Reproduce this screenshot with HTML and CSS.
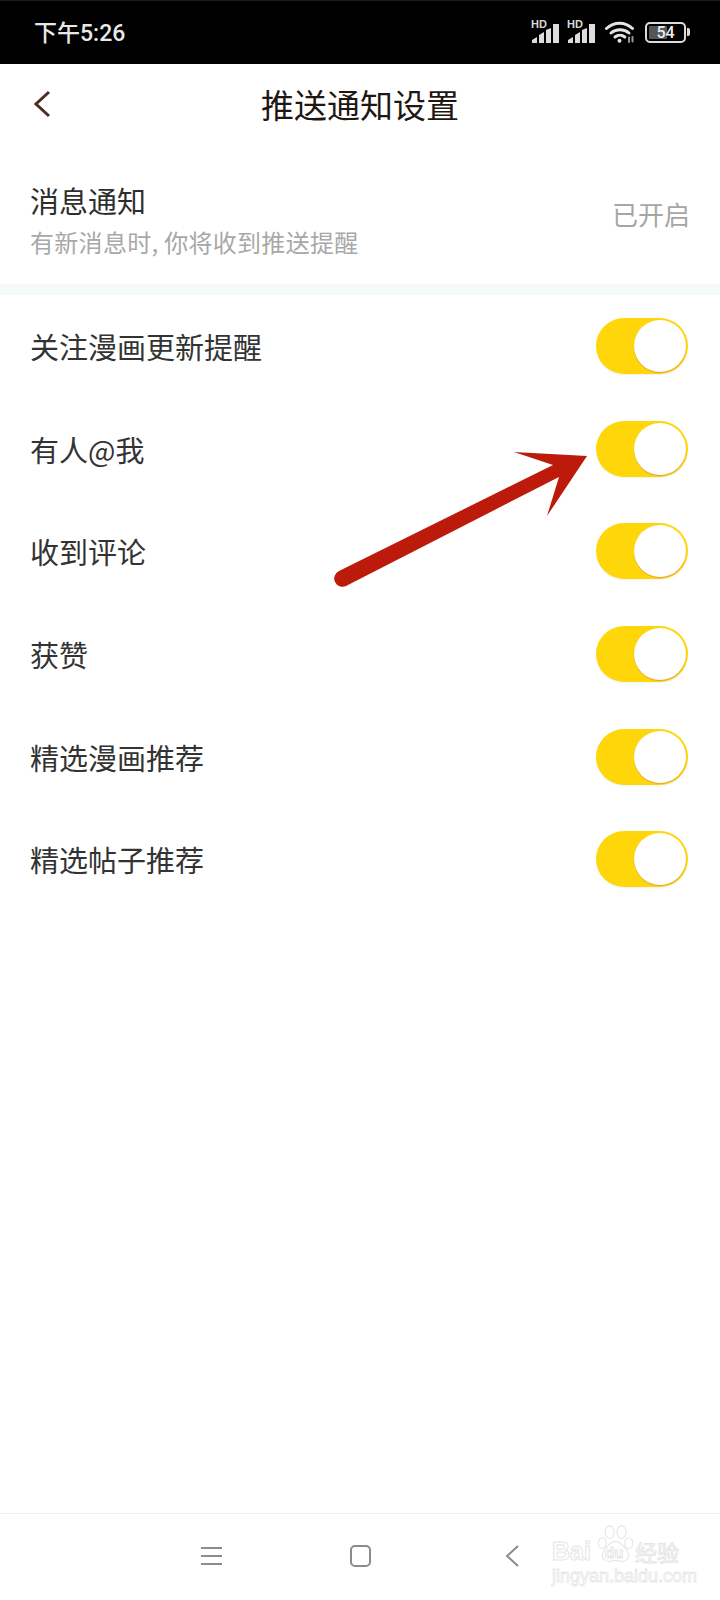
FILE: index.html
```html
<!DOCTYPE html>
<html lang="zh-CN">
<head>
  <meta charset="utf-8">
  <title>推送通知设置</title>
  <link rel="stylesheet" href="styles.css">
</head>
<body>
  <div class="page">
    <div class="status">
      <span class="time">下午5:26</span>
      <div class="status-icons">
        <div class="sim">
          <span class="hd">HD</span>
          <svg class="bars" width="28" height="20" viewBox="0 0 28 20"><path d="M0 20v-3l5-3v6zM7 20v-8l5-3v11zM14 20V7l5-2v15zM21 20V1h6v19z" fill="#dcdcdc"/></svg>
        </div>
        <div class="sim">
          <span class="hd">HD</span>
          <svg class="bars" width="28" height="20" viewBox="0 0 28 20"><path d="M0 20v-3l5-3v6zM7 20v-8l5-3v11zM14 20V7l5-2v15zM21 20V1h6v19z" fill="#dcdcdc"/></svg>
        </div>
        <svg class="wifi" width="30" height="22" viewBox="0 0 30 22" fill="none" stroke="#e4e4e4" stroke-width="3" stroke-linecap="round">
          <path d="M1.500 7.500C9 .5 20 .5 27.500 7.500"/>
          <path d="M6 12c5-4.500 13-4.500 18 0"/>
          <path d="M10 16c2.800-2.300 7-2.300 9.800 0"/>
          <circle cx="14.500" cy="19.800" r="2" fill="#e4e4e4" stroke="none"/>
          <path d="M24 16.500v4.500M27.500 16v4.500" stroke="#9a9a9a" stroke-width="2"/>
        </svg>
        <div class="battery">
          <div class="battery-body">
            <span class="battery-level"></span>
            <span class="battery-num">54</span>
          </div>
          <span class="battery-cap"></span>
        </div>
      </div>
    </div>

    <div class="header">
      <svg class="back" width="18" height="28" viewBox="0 0 18 28" fill="none"><path d="M16 2 3 14l13 12" stroke="#4a2d20" stroke-width="3"/></svg>
      <h1 class="title">推送通知设置</h1>
    </div>

    <div class="notice">
      <div class="notice-text">
        <div class="notice-name">消息通知</div>
        <div class="notice-sub">有新消息时, 你将收到推送提醒</div>
      </div>
      <div class="notice-state">已开启</div>
    </div>

    <div class="band"></div>

    <div class="list">
      <div class="row"><span class="label">关注漫画更新提醒</span><div class="toggle"><span class="knob"></span></div></div>
      <div class="row"><span class="label">有人@我</span><div class="toggle"><span class="knob"></span></div></div>
      <div class="row"><span class="label">收到评论</span><div class="toggle"><span class="knob"></span></div></div>
      <div class="row"><span class="label">获赞</span><div class="toggle"><span class="knob"></span></div></div>
      <div class="row"><span class="label">精选漫画推荐</span><div class="toggle"><span class="knob"></span></div></div>
      <div class="row"><span class="label">精选帖子推荐</span><div class="toggle"><span class="knob"></span></div></div>
    </div>

    <div class="spacer"></div>

    <div class="nav">
      <div class="nav-menu"><span></span><span></span><span></span></div>
      <div class="nav-home"></div>
      <svg class="nav-back" width="14" height="22" viewBox="0 0 14 22" fill="none"><path d="M13 1 2 11l11 10" stroke="#8c8c8c" stroke-width="2"/></svg>
    </div>

    <!-- annotation drawn over the screenshot -->
    <svg class="arrow" width="720" height="1600" viewBox="0 0 720 1600">
      <path d="M587 456 514 452 553 465 339 571a8 8 0 0 0 7 15L559 477 547 516z" fill="#bc1a0a"/>
    </svg>

    <div class="mark">
      <svg class="paw" width="40" height="44" viewBox="0 0 44 44" fill="#fff" stroke="#e6e6e6" stroke-width="1.200">
        <ellipse cx="7" cy="20" rx="4.500" ry="6"/>
        <ellipse cx="15" cy="8" rx="5" ry="7"/>
        <ellipse cx="28" cy="8" rx="5" ry="7"/>
        <ellipse cx="36" cy="20" rx="4.500" ry="6"/>
        <path d="M21 18c-6 0-8 6-12 10-4 5-1 12 5 12 3 0 5-1 7-1s5 1 8 1c6 0 9-7 5-12-4-4-6-10-13-10z"/>
      </svg>
      <div class="mark-top"><span class="mark-bai">Bai</span><span class="mark-du">du</span><span class="mark-cn">经验</span></div>
      <div class="mark-url">jingyan.baidu.com</div>
    </div>
  </div>
</body>
</html>
```

FILE: styles.css
```css
body {margin:0; background:#fff; font-family:"Noto Sans CJK SC","Noto Sans",sans-serif;}
.page {position:relative; display:flex; flex-direction:column; width:720px; height:1600px; overflow:hidden;}

.status {display:flex; align-items:center; justify-content:space-between; box-sizing:border-box; height:64px; padding:0 30px 0 34px; background:#000; border-top:1px solid #1c1c1c;}
.time {font-family:Roboto,"Noto Sans CJK SC",sans-serif; font-size:23px; font-weight:500; color:#e8e8e8; margin-top:-3px;}
.status-icons {display:flex; align-items:flex-end; height:24px; margin-top:-3px;}
.sim {position:relative; width:28px; height:22px; margin-right:8px;}
.hd {position:absolute; left:0; top:-3px; font-family:"Liberation Sans",sans-serif; font-size:11px; font-weight:bold; color:#d8d8d8;}
.bars {position:absolute; left:1px; bottom:0;}
.wifi {margin:0 10px 0 2px;}
.battery {display:flex; align-items:center; height:22px;}
.battery-body {position:relative; box-sizing:border-box; width:41px; height:21px; border:2px solid #dcdcdc; border-radius:5px; display:flex; align-items:center; justify-content:center;}
.battery-level {position:absolute; left:2px; top:2px; bottom:2px; width:18px; background:#555; border-radius:1px;}
.battery-num {position:relative; font-family:Roboto,sans-serif; font-size:16px; font-weight:500; color:#eee;}
.battery-cap {width:3px; height:8px; margin-left:1px; background:#dcdcdc; border-radius:0 2px 2px 0;}

.header {position:relative; display:flex; align-items:center; justify-content:center; height:82px;}
.back {position:absolute; left:33px; top:26px;}
.title {margin:-2px 0 0; font-size:33px; font-weight:400; color:#1f1712;}

.notice {display:flex; align-items:center; justify-content:space-between; box-sizing:border-box; height:138px; padding:0 30px;}
.notice-text {display:flex; flex-direction:column; margin-top:10px;}
.notice-name {font-size:29px; line-height:40px; color:#2e2e2e;}
.notice-sub {font-size:24px; line-height:36px; margin-top:4px; letter-spacing:.3px; color:#a8a8a8;}
.notice-state {font-size:26px; margin-bottom:4px; color:#a6a6a6;}

.band {height:11px; background:#f5f9fa;}

.list {display:flex; flex-direction:column;}
.row {display:flex; align-items:center; justify-content:space-between; height:102.6px; padding:0 32px 0 30px;}
.label {font-size:29px; color:#333;}
.toggle {display:flex; justify-content:flex-end; align-items:center; box-sizing:border-box; width:92px; height:56px; padding-right:2px; background:#ffd60a; border-radius:28px; box-shadow:0 2px 3px -2px rgba(0,0,0,.12);}
.knob {width:52px; height:52px; background:#fff; border-radius:50%; box-shadow:0 1px 1px #e2a52a;}

.spacer {flex:1;}

.nav {display:flex; align-items:center; box-sizing:border-box; height:87px; padding:0 0 3px 201px; border-top:1px solid #f0f0f0;}
.nav-menu {display:flex; flex-direction:column; justify-content:space-between; width:21px; height:18px; margin-right:128px;}
.nav-menu span {display:block; height:2px; background:#8c8c8c;}
.nav-home {box-sizing:border-box; width:21px; height:22px; margin-right:134px; border:2px solid #8c8c8c; border-radius:5px;}

.arrow {position:absolute; left:0; top:0;}

.mark {position:absolute; left:552px; top:1523px; width:130px; height:62px;}
.paw {position:absolute; left:44px; top:0;}
.mark-top {position:absolute; left:0; top:16px; display:flex; align-items:center; height:24px; line-height:24px; font-family:"Liberation Sans",sans-serif; font-weight:bold; color:#fff; -webkit-text-stroke:1px #e6e6e6;}
.mark-bai {width:53px; font-size:25px;}
.mark-du {width:30px; font-size:15px; margin-top:4px;}
.mark-cn {font-family:"Noto Sans CJK SC",sans-serif; font-size:22px; font-weight:normal;}
.mark-url {position:absolute; left:0; top:44px; font-family:"Liberation Sans",sans-serif; font-size:18px; line-height:18px; white-space:nowrap; color:#fff; -webkit-text-stroke:.8px #e6e6e6;}
```
